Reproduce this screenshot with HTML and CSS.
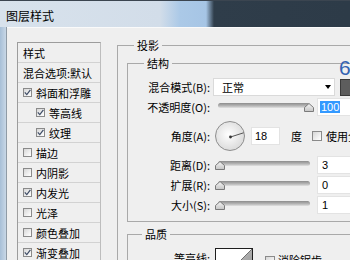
FILE: index.html
```html
<!DOCTYPE html>
<html lang="zh-CN">
<head>
<meta charset="utf-8">
<title>图层样式</title>
<link rel="stylesheet" href="styles.css">
</head>
<body>
<div class="win">
  <div class="titlebar"><span class="title">图层样式</span></div>
  <div class="frame">
    <div class="edge"></div>
    <div class="body">
      <div class="styles">
        <div class="item hdr">样式</div>
        <div class="item">混合选项:默认</div>
        <div class="item"><span class="cb on"><svg width="7" height="7" viewBox="0 0 7 7"><polyline points="0.8,3.4 2.8,5.6 6.4,0.8" fill="none" stroke="#3e4c66" stroke-width="1.2"/></svg></span>斜面和浮雕</div>
        <div class="item sub"><span class="cb on"><svg width="7" height="7" viewBox="0 0 7 7"><polyline points="0.8,3.4 2.8,5.6 6.4,0.8" fill="none" stroke="#3e4c66" stroke-width="1.2"/></svg></span>等高线</div>
        <div class="item sub"><span class="cb on"><svg width="7" height="7" viewBox="0 0 7 7"><polyline points="0.8,3.4 2.8,5.6 6.4,0.8" fill="none" stroke="#3e4c66" stroke-width="1.2"/></svg></span>纹理</div>
        <div class="item"><span class="cb"></span>描边</div>
        <div class="item"><span class="cb"></span>内阴影</div>
        <div class="item"><span class="cb on"><svg width="7" height="7" viewBox="0 0 7 7"><polyline points="0.8,3.4 2.8,5.6 6.4,0.8" fill="none" stroke="#3e4c66" stroke-width="1.2"/></svg></span>内发光</div>
        <div class="item"><span class="cb"></span>光泽</div>
        <div class="item"><span class="cb"></span>颜色叠加</div>
        <div class="item"><span class="cb on"><svg width="7" height="7" viewBox="0 0 7 7"><polyline points="0.8,3.4 2.8,5.6 6.4,0.8" fill="none" stroke="#3e4c66" stroke-width="1.2"/></svg></span>渐变叠加</div>
      </div>
      <div class="main">
        <fieldset class="grp drop">
          <legend>投影</legend>
          <fieldset class="grp struct">
            <legend>结构</legend>
            <div class="row">
              <span class="lbl">混合模式(B):</span>
              <div class="select"><span>正常</span><span class="caret"></span></div>
              <span class="swatch"></span>
            </div>
            <div class="row">
              <span class="lbl">不透明度(O):</span>
              <div class="slider"><svg class="handle max" width="10" height="9" viewBox="0 0 10 9"><defs><linearGradient id="hg1" x1="0" y1="0" x2="0" y2="1"><stop offset="0" stop-color="#f6f6f6"/><stop offset="1" stop-color="#c4c4c4"/></linearGradient></defs><polygon points="0.5,4.5 5,0.5 9.5,4.5 9.5,8.5 0.5,8.5" fill="url(#hg1)" stroke="#7a7a7a"/></svg></div>
              <div class="val op"><span class="sel">100</span></div>
            </div>
            <div class="row angle">
              <span class="lbl">角度(A):</span>
              <svg class="dial" width="30" height="30" viewBox="0 0 30 30"><defs><radialGradient id="dg" cx="0.45" cy="0.45" r="0.6"><stop offset="0" stop-color="#ffffff"/><stop offset="1" stop-color="#d8d8d8"/></radialGradient></defs><circle cx="15" cy="15" r="14.5" fill="url(#dg)" stroke="#8e8e8e"/><line x1="15.5" y1="16" x2="28.6" y2="11.8" stroke="#555" stroke-width="1"/><circle cx="15.5" cy="16" r="1.4" fill="#333"/></svg>
              <div class="val ang">18</div>
              <span class="unit">度</span>
              <span class="cb big"></span>
              <span class="cbtxt">使用全局光</span>
            </div>
            <div class="row">
              <span class="lbl">距离(D):</span>
              <div class="slider"><svg class="handle min" width="10" height="9" viewBox="0 0 10 9"><defs><linearGradient id="hg2" x1="0" y1="0" x2="0" y2="1"><stop offset="0" stop-color="#f6f6f6"/><stop offset="1" stop-color="#c4c4c4"/></linearGradient></defs><polygon points="0.5,4.5 5,0.5 9.5,4.5 9.5,8.5 0.5,8.5" fill="url(#hg2)" stroke="#7a7a7a"/></svg></div>
              <div class="val">3</div>
            </div>
            <div class="row">
              <span class="lbl">扩展(R):</span>
              <div class="slider"><svg class="handle min" width="10" height="9" viewBox="0 0 10 9"><defs><linearGradient id="hg3" x1="0" y1="0" x2="0" y2="1"><stop offset="0" stop-color="#f6f6f6"/><stop offset="1" stop-color="#c4c4c4"/></linearGradient></defs><polygon points="0.5,4.5 5,0.5 9.5,4.5 9.5,8.5 0.5,8.5" fill="url(#hg3)" stroke="#7a7a7a"/></svg></div>
              <div class="val">0</div>
            </div>
            <div class="row">
              <span class="lbl">大小(S):</span>
              <div class="slider"><svg class="handle min" width="10" height="9" viewBox="0 0 10 9"><defs><linearGradient id="hg4" x1="0" y1="0" x2="0" y2="1"><stop offset="0" stop-color="#f6f6f6"/><stop offset="1" stop-color="#c4c4c4"/></linearGradient></defs><polygon points="0.5,4.5 5,0.5 9.5,4.5 9.5,8.5 0.5,8.5" fill="url(#hg4)" stroke="#7a7a7a"/></svg></div>
              <div class="val">1</div>
            </div>
          </fieldset>
          <fieldset class="grp quality">
            <legend>品质</legend>
            <div class="row contour">
              <span class="lbl">等高线:</span>
              <svg class="curve" width="38" height="38" viewBox="0 0 38 38"><defs><linearGradient id="cg" x1="0" y1="0" x2="1" y2="1"><stop offset="0" stop-color="#d0d0d0"/><stop offset="1" stop-color="#8a8a8a"/></linearGradient></defs><rect x="0.5" y="0.5" width="37" height="37" fill="#fff" stroke="#1e1e1e"/><polygon points="1,37 37,1 37,37" fill="url(#cg)"/><line x1="1" y1="37" x2="37" y2="1" stroke="#555" stroke-width="0.8"/></svg>
              <span class="cb big aa"></span>
              <span class="cbtxt aatxt">消除锯齿</span>
            </div>
          </fieldset>
        </fieldset>
      </div>
    </div>
  </div>
  <span class="note">6</span>
</div>
</body>
</html>
```

FILE: styles.css
```css
* { box-sizing: border-box; }
html, body { margin: 0; padding: 0; }
body {
  width: 350px;
  height: 260px;
  overflow: hidden;
  background: #efefef;
  font-family: "Noto Sans CJK SC", "Noto Sans", sans-serif;
  font-size: 11px;
  color: #000;
}
.win {
  position: relative;
  width: 480px;
  height: 260px;
  display: flex;
  flex-direction: column;
}
.titlebar {
  height: 27px;
  flex: none;
  border-top: 1px solid #3b4550;
  background: linear-gradient(to right, #d8e2ec 0, #d2dde9 160px, #abc9e7 180px, #a6c5e5 206px, #2f3d4a 214px, #2b3946 100%);
  display: flex;
  align-items: center;
  padding: 3px 0 0 6px;
  font-size: 12px;
  line-height: 14px;
}
.frame {
  flex: 1;
  display: flex;
}
.edge {
  width: 7px;
  flex: none;
  background: linear-gradient(to right, #a7bfd7, #c8d7e6);
  border-right: 1px solid #8f9ba6;
}
.body {
  flex: 1;
  display: flex;
  align-items: flex-start;
  background: #efefef;
  border-top: 1px solid #fafafa;
  padding-left: 10px;
}
.styles {
  width: 84px;
  flex: none;
  margin-top: 14px;
  border: 1px solid #9c9c9c;
  border-right-color: #bdbdbd;
  border-bottom: none;
  background: #efefef;
}
.item {
  height: 20px;
  border-bottom: 1px solid #d2d2d2;
  display: flex;
  align-items: center;
  gap: 4px;
  padding-left: 5px;
  line-height: 14px;
  white-space: nowrap;
}
.item.sub { padding-left: 18px; }
.cb {
  width: 9px;
  height: 9px;
  flex: none;
  border: 1px solid #8a8a8a;
  background: linear-gradient(135deg, #d6d6d6, #f4f4f4 70%, #ffffff);
  display: flex;
  align-items: center;
  justify-content: center;
}
.cb svg { display: block; }
.cb.big { width: 10px; height: 10px; }
.main {
  flex: none;
  width: 360px;
  margin-left: 16px;
  margin-top: 10px;
}
fieldset {
  margin: 0;
  padding: 0;
  min-width: 0;
  border: 1px solid #a9a9a9;
}
legend {
  padding: 0 3px;
  font-size: 11px;
  line-height: 14px;
}
.drop {
  padding: 4px 0 0 9px;
  border-right: none;
  height: 300px;
}
.drop > legend { margin-left: 7px; }
.struct {
  padding: 7px 0 6px 0;
  border-right: none;
}
.struct > legend { margin-left: 16px; }
.quality {
  margin-top: 5px;
  padding: 7px 0 0 0;
  border-right: none;
  height: 80px;
}
.quality > legend { margin-left: 14px; }
.row {
  display: flex;
  align-items: center;
  height: 20px;
  white-space: nowrap;
}
.row.angle { height: 38px; }
.lbl {
  width: 82px;
  flex: none;
  text-align: right;
  line-height: 14px;
}
.select {
  margin-left: 3px;
  width: 122px;
  height: 18px;
  flex: none;
  background: #fff;
  border: 1px solid #dadada;
  display: flex;
  align-items: center;
  justify-content: space-between;
  padding: 0 3px 0 8px;
  line-height: 14px;
}
.caret {
  width: 0;
  height: 0;
  border-left: 3px solid transparent;
  border-right: 3px solid transparent;
  border-top: 4px solid #000;
}
.swatch {
  margin-left: 5px;
  width: 14px;
  height: 17px;
  flex: none;
  background: #5d5d5d;
  border: 1px solid #3a3a3a;
}
.slider {
  position: relative;
  margin-left: 8px;
  margin-top: -3px;
  width: 92px;
  height: 5px;
  flex: none;
  border-radius: 3px;
  background: linear-gradient(#8c8c8c, #b8b8b8 60%, #e2e2e2);
}
.handle {
  position: absolute;
  top: 0;
  display: block;
}
.handle.min { left: -3px; }
.handle.max { left: 86px; }
.val {
  margin-left: 7px;
  width: 44px;
  height: 18px;
  flex: none;
  background: #fff;
  border: 1px solid #e3e3e3;
  padding-left: 4px;
  display: flex;
  align-items: center;
  font-family: "Liberation Sans", Arial, sans-serif;
  font-size: 11px;
  line-height: 12px;
}
.val.op { padding-left: 2px; }
.sel {
  background: #3399ff;
  color: #fff;
  padding: 0 1px;
  line-height: 12px;
}
.dial {
  margin-left: 5px;
  flex: none;
  display: block;
}
.val.ang {
  margin-left: 6px;
  width: 29px;
  padding-left: 3px;
}
.unit { margin-left: 11px; line-height: 14px; }
.row .cb.big { margin-left: 10px; }
.cbtxt { margin-left: 4px; line-height: 14px; }
.row.contour {
  height: auto;
  align-items: flex-start;
}
.contour .lbl { margin-top: 3px; }
.curve {
  margin-left: 5px;
  flex: none;
  display: block;
}
.row .cb.aa { margin-left: 12px; margin-top: 8px; }
.aatxt { margin-left: 3px; margin-top: 5px; }
.note {
  position: absolute;
  left: 339px;
  top: 57px;
  font-family: "Liberation Sans", Arial, sans-serif;
  font-size: 21px;
  line-height: 21px;
  color: #3463b2;
}
```
